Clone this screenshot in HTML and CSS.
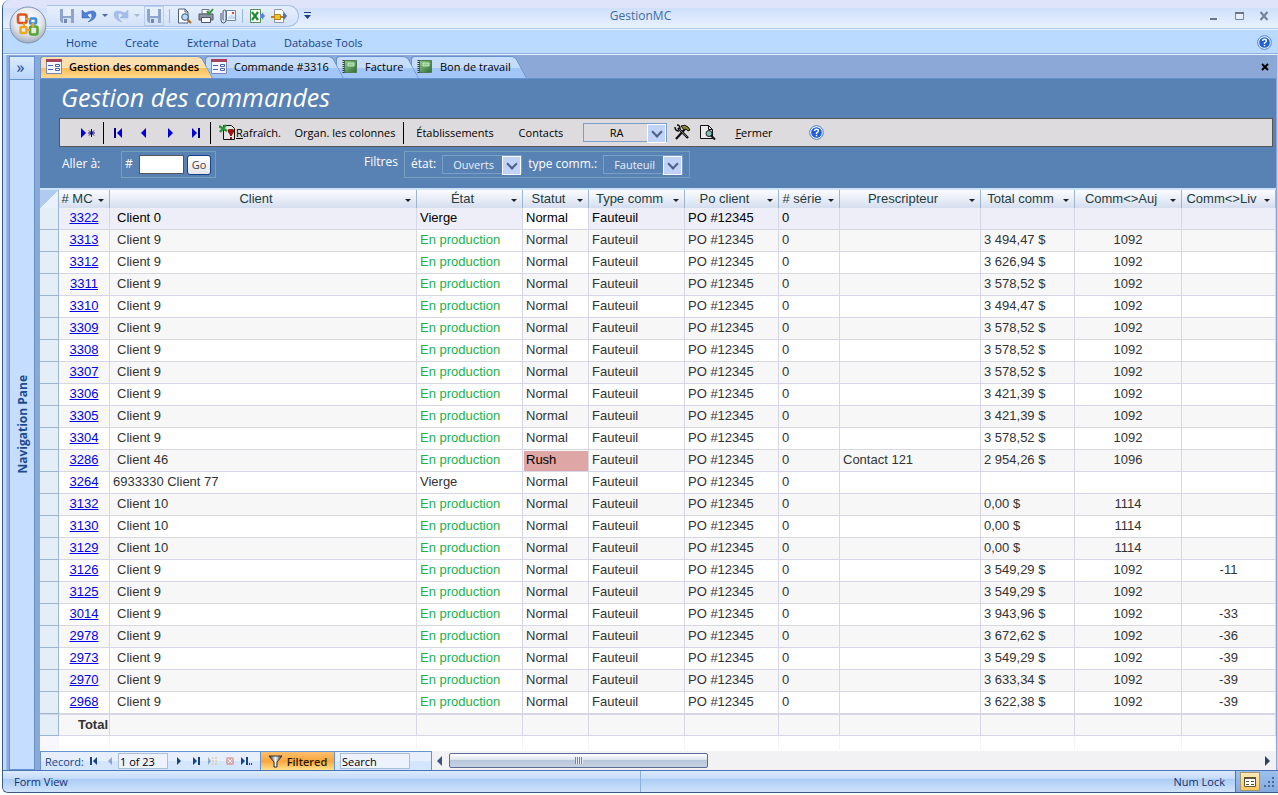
FILE: index.html
```html
<!DOCTYPE html>
<html lang="fr">
<head>
  <meta charset="UTF-8">
  <title>GestionMC</title>
  <link rel="stylesheet" href="styles.css">
</head>
<body>

<!-- Shared icons -->
<svg class="defs" aria-hidden="true">
  <defs>
    <radialGradient id="orb" cx="50%" cy="35%" r="65%">
      <stop offset="0" stop-color="#ffffff"/>
      <stop offset="0.6" stop-color="#e3e7ee"/>
      <stop offset="1" stop-color="#a3adbd"/>
    </radialGradient>
    <linearGradient id="green" x1="0" y1="0" x2="1" y2="1">
      <stop offset="0" stop-color="#8fce84"/>
      <stop offset="1" stop-color="#2f6b38"/>
    </linearGradient>
    <linearGradient id="funnel" x1="0" y1="0" x2="1" y2="0">
      <stop offset="0" stop-color="#2a2a2a"/>
      <stop offset="0.5" stop-color="#f4f4f4"/>
      <stop offset="1" stop-color="#333333"/>
    </linearGradient>
    <symbol id="i-save" viewBox="0 0 16 16">
      <path d="M1 1h14v14H3l-2-2z" fill="#8ea5cb"/>
      <path d="M4 1h8v7H4z" fill="#e9eff9"/>
      <path d="M4 10h8v5H4z" fill="#d4dff0"/>
      <path d="M5 11h3v4H5z" fill="#7188b3"/>
    </symbol>
    <symbol id="i-undo" viewBox="0 0 16 16">
      <path d="M1 2v8h8L6 7q5-4 5 1 0 3-4 6 7-2 8-7Q15 0 4 5z" fill="#4f7fd6" stroke="#2c5cb8" stroke-width="0.5"/>
    </symbol>
    <symbol id="i-form" viewBox="0 0 16 16">
      <path d="M0.5 0.5h15v14H0.5z" fill="#f3f6fd" stroke="#7c86b5"/>
      <path d="M0 0h16v3H0z" fill="#a8425c"/>
      <path d="M2 6.500h5M2 10.500h5" stroke="#4a62a8"/>
      <path d="M9.500 5.500h4v2h-4zM9.500 9.500h4v2h-4z" fill="#fff" stroke="#4a62a8"/>
    </symbol>
    <symbol id="i-report" viewBox="0 0 16 16">
      <path d="M2.500 1.500h12v12h-12z" fill="url(#green)" stroke="#4d7a50"/>
      <path d="M6 4h6v3H6z" fill="#8fca88" stroke="#d8f0d4" stroke-width="0.8"/>
      <path d="M1.500 1v13" stroke="#333" stroke-width="2" stroke-dasharray="1 1"/>
    </symbol>
    <symbol id="i-help" viewBox="0 0 16 16">
      <circle cx="8" cy="8" r="7.300" fill="#f2f7ff" stroke="#4a78c8"/>
      <circle cx="8" cy="8" r="5.700" fill="#1f5fd8"/>
      <path d="M6 6.500q0-2 2-2t2 1.800q0 1-2 2.200v1M8 10.500v1.500" fill="none" stroke="#fff" stroke-width="1.500"/>
    </symbol>
    <symbol id="i-preview" viewBox="0 0 16 16">
      <path d="M2.500 1h6.500l3 3v11H2.500z" fill="#fff" stroke="#4c5e80"/>
      <path d="M9 1v3h3" fill="none" stroke="#4c5e80"/>
      <circle cx="9" cy="9" r="3.300" fill="#b7dcf2" stroke="#34557f"/>
      <path d="M11.500 11.500l3.500 3.500" stroke="#b06a1e" stroke-width="2"/>
    </symbol>
  </defs>
</svg>

<div class="window">
  <!-- Title bar -->
  <header class="titlebar">
    <div class="qat">
      <button aria-label="Save"><svg width="16" height="16"><use href="#i-save"/></svg></button>
      <button aria-label="Undo"><svg width="16" height="16"><use href="#i-undo"/></svg></button>
      <i class="drop"></i>
      <button class="dim" aria-label="Redo"><svg class="flip" width="16" height="16"><use href="#i-undo"/></svg></button>
      <i class="drop dim"></i>
      <button class="boxed" aria-label="Save object"><svg width="16" height="16"><use href="#i-save"/></svg></button>
      <i class="split"></i>
      <button aria-label="Print preview"><svg width="16" height="16"><use href="#i-preview"/></svg></button>
      <button aria-label="Print">
        <svg width="16" height="16" viewBox="0 0 16 16">
          <path d="M4 1.500h7V6H4z" fill="#fff" stroke="#6b7690"/>
          <path d="M1 6h14v6H1z" fill="#8f95a4" stroke="#4f5666"/>
          <path d="M3.500 9.500h9v5h-9z" fill="#f8f8f8" stroke="#4c5468"/>
          <path d="M9 3l2 3 4-5" fill="none" stroke="#2f9a3a" stroke-width="2"/>
        </svg>
      </button>
      <button aria-label="Send by mail">
        <svg width="16" height="16" viewBox="0 0 16 16">
          <path d="M6.500 2.500h9v10h-9z" fill="#f6f9ff" stroke="#6d83ad"/>
          <path d="M8 9l3.500-2.500L15 9v2H8z" fill="#c9d9f3"/>
          <path d="M12 4h2v2h-2z" fill="#c8483c"/>
          <path d="M1 5v7q0 3 2.500 3T6 12V4q0-2-1.500-2T3 4v7q0 1 1 1" fill="none" stroke="#4b5870"/>
        </svg>
      </button>
      <i class="split"></i>
      <button aria-label="Export to Excel">
        <svg width="16" height="16" viewBox="0 0 16 16">
          <path d="M1.500 1.500h10v13h-10z" fill="#fff" stroke="#4f8f50"/>
          <path d="M3 4l6 8M9 4l-6 8" stroke="#1f8a35" stroke-width="2.200"/>
          <path d="M11 6h2V4l3 4-3 4v-2h-2z" fill="#5d86d8"/>
        </svg>
      </button>
      <button aria-label="Export">
        <svg width="16" height="16" viewBox="0 0 16 16">
          <path d="M3.500 1.500h7l2 2v11h-9z" fill="#fff" stroke="#8a93a8"/>
          <path d="M0 9h3M9 9h3" stroke="#b9821a" stroke-width="2"/>
          <path d="M3.500 6.500h6v5h-6z" fill="#f2c230" stroke="#b9821a"/>
          <path d="M12 6h1V4l3 4-3 4v-2h-1z" fill="#4d72c4"/>
        </svg>
      </button>
    </div>
    <button class="qat-more" aria-label="Customize toolbar"><svg width="7" height="8"><path d="M0 0.500h7" stroke="#15428b"/><path d="M0 3h7L3.500 7z" fill="#15428b"/></svg></button>
    <h1>GestionMC</h1>
    <div class="win-buttons">
      <button aria-label="Minimize"><svg width="10" height="10"><path d="M1 8h7" stroke="#6b7488" stroke-width="2"/></svg></button>
      <button aria-label="Restore"><svg width="10" height="10"><path d="M1.500 2.500h8v6h-8z" fill="#e8effc" stroke="#7484a6"/><path d="M1 2h9" stroke="#6b7488" stroke-width="2"/></svg></button>
      <button aria-label="Close"><svg width="10" height="10"><path d="M1.500 1l7 8M8.500 1l-7 8" stroke="#70809f" stroke-width="2"/></svg></button>
    </div>
  </header>

  <button class="office" aria-label="Office">
    <svg width="38" height="38" viewBox="0 0 38 38">
      <circle cx="19" cy="19" r="18" fill="url(#orb)" stroke="#7e93b5"/>
      <g fill="none" stroke-width="2.600">
        <rect x="9" y="8.500" width="8.500" height="8.500" rx="2" stroke="#e0531c"/>
        <rect x="21" y="12.500" width="6" height="5" rx="1" stroke="#3f8fd8"/>
        <rect x="11.500" y="21" width="6" height="6" rx="1" stroke="#f2a81d"/>
        <rect x="21" y="20.500" width="7.500" height="8" rx="2" stroke="#5aa532"/>
      </g>
      <path d="M17 13h4M15 17v4M24 17v4M17 24h4" stroke="#e8a33c" stroke-width="2"/>
    </svg>
  </button>

  <!-- Ribbon -->
  <nav class="ribbon">
    <a href="#">Home</a>
    <a href="#">Create</a>
    <a href="#">External Data</a>
    <a href="#">Database Tools</a>
    <button class="help" aria-label="Help"><svg width="15" height="15"><use href="#i-help"/></svg></button>
  </nav>

  <div class="workspace">
    <aside class="nav-pane">
      <button aria-label="Open navigation pane">»</button>
      <div class="nav-label"><span>Navigation Pane</span></div>
    </aside>

    <main class="document">
      <div class="tabs">
        <button class="tab active"><svg width="16" height="16"><use href="#i-form"/></svg><span>Gestion des commandes</span></button>
        <button class="tab order"><svg width="16" height="16"><use href="#i-form"/></svg><span>Commande #3316</span></button>
        <button class="tab invoice"><svg width="16" height="16"><use href="#i-report"/></svg><span>Facture</span></button>
        <button class="tab work"><svg width="16" height="16"><use href="#i-report"/></svg><span>Bon de travail</span></button>
        <button class="tab-close" aria-label="Close tab"><svg width="8" height="8"><path d="M1 1l6 6M7 1l-6 6" stroke="#000" stroke-width="2"/></svg></button>
      </div>

      <!-- Form header -->
      <section class="form-header">
        <h2>Gestion des commandes</h2>

        <div class="toolbar">
          <button class="new" aria-label="Nouveau"><svg width="16" height="12"><path d="M1 1v10l5-5z" fill="#0000d8"/><path d="M11.500 2v8M8 6h7M9 3.500l5 5M14 3.500l-5 5" stroke="#000080"/></svg></button>
          <i class="sep"></i>
          <button aria-label="Premier"><svg width="10" height="12"><path d="M1 1h2v10H1z" fill="#000080"/><path d="M9 1v10L4 6z" fill="#0000d8"/></svg></button>
          <button aria-label="Précédent"><svg width="10" height="12"><path d="M7 1v10L2 6z" fill="#0000d8"/></svg></button>
          <button aria-label="Suivant"><svg width="10" height="12"><path d="M3 1v10l5-5z" fill="#0000d8"/></svg></button>
          <button aria-label="Dernier"><svg width="10" height="12"><path d="M1 1v10l5-5z" fill="#0000d8"/><path d="M7 1h2v10H7z" fill="#000080"/></svg></button>
          <i class="sep"></i>
          <button class="refresh">
            <svg width="17" height="17" viewBox="0 0 17 17">
              <path d="M4.500 1.500h8l3 3v11h-11z" fill="#e4e2e2" stroke="#111"/>
              <path d="M0 2l8 5M7 1L1 8" stroke="#27963a" stroke-width="2.400"/>
              <path d="M11 5q-3 0-2 3l2 3v1h2v-1l2-3q1-3-2-3z" fill="#a01414"/>
              <path d="M11 13h2v2h-2z" fill="#a01414"/>
            </svg><span><u>R</u>afraîch.</span>
          </button>
          <button class="columns">Organ. les colonnes</button>
          <i class="sep"></i>
          <button class="places">Établissements</button>
          <button class="contacts">Contacts</button>
          <span class="combo user"><select aria-label="Utilisateur"><option>RA</option></select></span>
          <button class="tool" aria-label="Outils">
            <svg width="17" height="17" viewBox="0 0 17 17">
              <path d="M2 15L11 5" stroke="#111" stroke-width="2.200"/>
              <path d="M7 2q4-2 7 1l2 3-2 1-2-2-2 1z" fill="#8b8a2a" stroke="#111"/>
              <path d="M4 4l10 10" stroke="#111" stroke-width="2.400"/>
              <path d="M1 3q0 4 4 4M3 1q3 0 3 4" fill="none" stroke="#111" stroke-width="1.500"/>
              <path d="M5 5l8 8" stroke="#bbb" stroke-width="0.600"/>
            </svg>
          </button>
          <button class="tool" aria-label="Aperçu">
            <svg width="17" height="17" viewBox="0 0 17 17">
              <path d="M1.500 1.500h8l4 4v9h-12z" fill="#eceaea" stroke="#111"/>
              <path d="M9.500 1.500v4h4" fill="none" stroke="#111"/>
              <circle cx="10" cy="9.500" r="3" fill="#7fc0b8" stroke="#222"/>
              <path d="M12 11.500l4 4" stroke="#111" stroke-width="2"/>
            </svg>
          </button>
          <button class="close"><u>F</u>ermer</button>
          <button class="help" aria-label="Aide"><svg width="15" height="15"><use href="#i-help"/></svg></button>
        </div>

        <div class="filters">
          <span class="caption">Aller à:</span>
          <form class="group goto" onsubmit="return false">
            <label for="goto">#</label>
            <input type="text" id="goto">
            <button>Go</button>
          </form>
          <span class="caption filter-caption">Filtres</span>
          <div class="group">
            <label for="etat">état:</label>
            <span class="combo"><select id="etat"><option>Ouverts</option></select></span>
            <label for="type">type comm.:</label>
            <span class="combo"><select id="type"><option>Fauteuil</option></select></span>
          </div>
        </div>
      </section>

      <!-- Orders -->
      <div class="sheet">
        <table>
          <colgroup>
            <col class="c-sel"><col class="c-mc"><col><col class="c-etat"><col class="c-statut"><col class="c-type">
            <col class="c-po"><col class="c-serie"><col class="c-presc"><col class="c-total"><col class="c-auj"><col class="c-liv">
          </colgroup>
          <thead>
            <tr>
              <th class="corner"></th>
              <th><div># MC</div></th>
              <th><div>Client</div></th>
              <th><div>État</div></th>
              <th><div>Statut</div></th>
              <th><div>Type comm</div></th>
              <th><div>Po client</div></th>
              <th><div># série</div></th>
              <th><div>Prescripteur</div></th>
              <th><div>Total comm</div></th>
              <th><div>Comm&lt;&gt;Auj</div></th>
              <th><div>Comm&lt;&gt;Liv</div></th>
            </tr>
          </thead>
          <tbody id="orders"></tbody>
          <tfoot>
            <tr class="total"><td></td><td>Total</td><td></td><td></td><td></td><td></td><td></td><td></td><td></td><td></td><td></td><td></td></tr>
            <tr class="tail"><td></td><td></td><td></td><td></td><td></td><td></td><td></td><td></td><td></td><td></td><td></td><td></td></tr>
          </tfoot>
        </table>
      </div>

      <!-- Record navigation -->
      <div class="record-bar">
        <div class="record-nav">
          <label for="record">Record:</label>
          <button aria-label="First record"><svg width="8" height="8"><path d="M0 0h2v8H0zM7 0v8L3 4z" fill="#15428b"/></svg></button>
          <button class="dim" aria-label="Previous record"><svg width="8" height="8"><path d="M6 0v8L2 4z" fill="#15428b"/></svg></button>
          <input type="text" id="record" value="1 of 23">
          <button class="next" aria-label="Next record"><svg width="8" height="8"><path d="M2 0v8l4-4z" fill="#15428b"/></svg></button>
          <button aria-label="Last record"><svg width="8" height="8"><path d="M1 0v8l4-4zM6 0h2v8H6z" fill="#15428b"/></svg></button>
          <button class="dim" aria-label="New record"><svg width="10" height="8"><path d="M0 0v8l3-4z" fill="#15428b"/><path d="M4 1h6M4 4h6M4 7h6" stroke="#e8b84a" stroke-width="2" stroke-dasharray="2 1"/></svg></button>
          <button class="dim" aria-label="Delete record"><svg width="8" height="8"><rect width="8" height="8" rx="2" fill="#d84a3a"/><path d="M2 2l4 4M6 2L2 6" stroke="#fff"/></svg></button>
          <button aria-label="Go to total"><svg width="12" height="8"><path d="M0 0v8l4-4zM5 0h2v8H5zM8 6h1v2H8zM10 6h1v2h-1z" fill="#15428b"/></svg></button>
          <button class="filtered"><svg width="15" height="13"><path d="M1 1h13L9 7v5H6V7z" fill="url(#funnel)" stroke="#333"/></svg><span>Filtered</span></button>
          <input type="text" class="search" aria-label="Search" value="Search">
        </div>
        <div class="scrollbar">
          <svg width="6" height="10"><path d="M5 0v10L0 5z" fill="#3b5480"/></svg>
          <div class="track"><div class="thumb"></div></div>
          <svg width="6" height="10"><path d="M0 0v10l5-5z" fill="#2c4266"/></svg>
        </div>
      </div>
    </main>
  </div>

  <!-- Status bar -->
  <footer class="status">
    <span class="view">Form View</span>
    <span class="keys">Num Lock</span>
    <div class="view-box">
      <button aria-label="Form View">
        <svg width="12" height="12"><path d="M0.500 1.500h11v9h-11z" fill="#fff" stroke="#5a5340"/><path d="M0 2h12" stroke="#5a5340" stroke-width="2"/><path d="M2 5.500h3M2 8.500h3M7 5.500h3M7 8.500h3" stroke="#5a5340"/></svg>
      </button>
      <svg width="12" height="12"><path d="M8 1h2v2H8zM4 5h2v2H4zM8 5h2v2H8zM0 9h2v2H0zM4 9h2v2H4zM8 9h2v2H8z" fill="#47689d"/></svg>
    </div>
  </footer>
</div>

<script>
  // mc, client, total, comm<>auj, comm<>liv
  const orders = [
    ['3322', 'Client 0', '', '', ''],
    ['3313', 'Client 9', '3 494,47 $', '1092', ''],
    ['3312', 'Client 9', '3 626,94 $', '1092', ''],
    ['3311', 'Client 9', '3 578,52 $', '1092', ''],
    ['3310', 'Client 9', '3 494,47 $', '1092', ''],
    ['3309', 'Client 9', '3 578,52 $', '1092', ''],
    ['3308', 'Client 9', '3 578,52 $', '1092', ''],
    ['3307', 'Client 9', '3 578,52 $', '1092', ''],
    ['3306', 'Client 9', '3 421,39 $', '1092', ''],
    ['3305', 'Client 9', '3 421,39 $', '1092', ''],
    ['3304', 'Client 9', '3 578,52 $', '1092', ''],
    ['3286', 'Client 46', '2 954,26 $', '1096', ''],
    ['3264', '6933330 Client 77', '', '', ''],
    ['3132', 'Client 10', '0,00 $', '1114', ''],
    ['3130', 'Client 10', '0,00 $', '1114', ''],
    ['3129', 'Client 10', '0,00 $', '1114', ''],
    ['3126', 'Client 9', '3 549,29 $', '1092', '-11'],
    ['3125', 'Client 9', '3 549,29 $', '1092', ''],
    ['3014', 'Client 9', '3 943,96 $', '1092', '-33'],
    ['2978', 'Client 9', '3 672,62 $', '1092', '-36'],
    ['2973', 'Client 9', '3 549,29 $', '1092', '-39'],
    ['2970', 'Client 9', '3 633,34 $', '1092', '-39'],
    ['2968', 'Client 9', '3 622,38 $', '1092', '-39']
  ];

  document.getElementById('orders').innerHTML = orders.map(([mc, client, total, auj, liv], i) => {
    const blank = total === '';
    const rush = mc === '3286';
    return `
      <tr class="${i === 0 ? 'current' : ''}">
        <td></td>
        <td class="num"><a href="#">${mc}</a></td>
        <td class="${/^\d/.test(client) ? '' : 'client'}">${client}</td>
        <td class="etat ${blank ? '' : 'prod'}">${blank ? 'Vierge' : 'En production'}</td>
        <td class="statut ${rush ? 'rush' : ''}">${rush ? 'Rush' : 'Normal'}</td>
        <td>Fauteuil</td>
        <td>PO #12345</td>
        <td>0</td>
        <td>${rush ? 'Contact 121' : ''}</td>
        <td>${total}</td>
        <td class="num">${auj}</td>
        <td class="num">${liv}</td>
      </tr>`;
  }).join('');
</script>

</body>
</html>
```
FILE: styles.css
```css
* {
  box-sizing: border-box;
}

body {
  margin: 0;
  padding: 0 0 2px 2px;
  min-height: 100vh;
  display: flex;
  background: #fff;
  font-family: "Open Sans", "Noto Sans", sans-serif;
  font-size: 11px;
  color: #000;
}

button, input, select {
  font: inherit;
  color: inherit;
}

button {
  display: flex;
  align-items: center;
  justify-content: center;
  padding: 0;
  border: none;
  background: none;
  white-space: nowrap;
}

svg {
  display: block;
  flex: none;
}

.defs {
  position: absolute;
  width: 0;
  height: 0;
}

.dim {
  opacity: 0.4;
}

.window {
  position: relative;
  flex: 1;
  min-width: 0;
  display: flex;
  flex-direction: column;
  border-left: 1px solid #3b5a82;
  border-bottom: 1px solid #3b5a82;
  border-radius: 8px 0 0 6px;
  background: #bbdaff;
  overflow: hidden;
}

/* Title bar */
.titlebar {
  display: flex;
  align-items: center;
  height: 29px;
  padding: 2px 9px 0 44px;
  background: linear-gradient(#dfe4fb 8px, #cfe0fb 8px, #e8f1ff 28px, #a9cdf3 28px);
}

/* title sits in the middle of the window, whatever the toolbar takes */
.titlebar h1 {
  position: absolute;
  left: 0;
  right: 0;
  margin: 0;
  font-size: 12px;
  font-weight: normal;
  text-align: center;
  color: #3e6aaa;
  pointer-events: none;
}

.qat {
  display: flex;
  align-items: center;
  gap: 6px;
  width: 252px;
  height: 22px;
  margin-right: 5px;
  padding-left: 12px;
  border: 1px solid #a9c1e6;
  border-left: none;
  border-radius: 0 11px 11px 0;
  background: linear-gradient(#e6effc, #d3e2f8);
}

.qat .boxed {
  width: 20px;
  height: 20px;
  margin: 0 -1px;
  border: 1px solid #b9cdec;
}

.flip {
  transform: scaleX(-1);
}

.drop {
  width: 0;
  height: 0;
  margin: 0 -1px;
  border: 3px solid transparent;
  border-top-color: #4a6ca8;
  border-bottom: none;
}

.split {
  width: 1px;
  height: 14px;
  background: #9fb8de;
}

.win-buttons {
  display: flex;
  gap: 15px;
  margin-left: auto;
}

.office {
  position: absolute;
  left: 6px;
  top: 6px;
}

/* Ribbon */
.ribbon {
  display: flex;
  align-items: center;
  gap: 28px;
  height: 26px;
  padding: 0 6px 0 63px;
  border-top: 1px solid #e6f1ff;
  border-bottom: 1px solid #e6f1ff;
  box-shadow: inset 0 -1px #8fb0dc;
}

.ribbon a {
  color: #15428b;
  text-decoration: none;
}

.ribbon .help {
  margin-left: auto;
}

/* Workspace */
.workspace {
  flex: 1;
  display: flex;
  gap: 5px;
  padding: 0 1px 0 6px;
  border-right: 1px solid #bcd0f5;
  background: linear-gradient(90deg, #bbdaff 3px, #8ba8d6 4px);
}

.nav-pane {
  display: flex;
  flex-direction: column;
  width: 26px;
  margin-top: 1px;
  border: 1px solid #6593cf;
  background: #c5deff;
}

.nav-pane button {
  height: 23px;
  padding: 0 3px 3px 0;
  border-bottom: 1px solid #6593cf;
  background: linear-gradient(#dcebfe, #b9d5fb);
  font-size: 16px;
  color: #15428b;
}

.nav-label {
  flex: 1;
  display: flex;
  align-items: center;
  justify-content: center;
}

.nav-label span {
  writing-mode: vertical-rl;
  transform: rotate(180deg);
  font-size: 12px;
  font-weight: bold;
  color: #1e4b8f;
}

.document {
  flex: 1;
  min-width: 0;
  display: flex;
  flex-direction: column;
}

/* Document tabs */
.tabs {
  display: flex;
  height: 24px;
  padding-top: 1px;
  border-bottom: 1px solid #6593cf;
  background: #8ba8d6;
}

.tab {
  position: relative;
  isolation: isolate;
  justify-content: flex-start;
  gap: 7px;
  padding: 0 0 2px 5px;
  border: 1px solid #6593cf;
  border-width: 1px 0 0 1px;
  border-radius: 4px 0 0 0;
  background: linear-gradient(#c6dcfb 50%, #a3c6f8 50%);
}

/* slanted right edge */
.tab::after {
  content: "";
  position: absolute;
  z-index: -1;
  top: -1px;
  bottom: 0;
  right: -8px;
  width: 30px;
  border: 1px solid #6593cf;
  border-width: 1px 1px 0 0;
  border-radius: 0 5px 0 0;
  background: inherit;
  transform: skewX(28deg);
  transform-origin: bottom;
}

/* the straight part stops before the slant starts */
.tab {
  margin-right: 10px;
}

.tab::after {
  right: -18px;
}

.tab.active {
  z-index: 4;
  width: 155px;
  font-weight: 600;
  background: linear-gradient(#fde0b0 50%, #fdbc55 50%, #ffd98c);
}

.tab.order {
  z-index: 3;
  width: 121px;
}

.tab.invoice {
  z-index: 2;
  width: 65px;
}

.tab.work {
  z-index: 1;
  width: 98px;
}

.tab-close {
  margin-left: auto;
  margin-right: 7px;
}

/* Form header */
.form-header {
  padding: 0 3px 10px 19px;
  background: #5982b4;
  color: #fff;
}

.form-header h2 {
  margin: 0;
  padding: 0 0 3px 2px;
  font-size: 25px;
  line-height: 36px;
  font-style: italic;
  font-weight: normal;
}

.toolbar {
  display: flex;
  align-items: center;
  height: 29px;
  padding-left: 13px;
  border: 1px solid #555;
  background: #dddbdd;
  color: #000;
}

.toolbar button {
  width: 26px;
  height: 24px;
}

.toolbar .new {
  width: 29px;
}

.sep {
  width: 1px;
  height: 22px;
  margin: 0 1px;
  background: #000;
}

.toolbar .refresh {
  width: 76px;
}

.toolbar .columns {
  width: 114px;
}

.toolbar .places {
  width: 100px;
}

.toolbar .contacts {
  width: 72px;
}

.toolbar .tool {
  width: 25px;
}

.toolbar .close {
  width: 68px;
}

.toolbar .help {
  width: 56px;
}

/* Combo boxes */
.combo {
  position: relative;
  display: block;
  width: 80px;
  height: 19px;
  border: 1px solid #7a9fc8;
}

.combo select {
  appearance: none;
  width: 100%;
  height: 100%;
  padding: 0 17px 0 0;
  border: none;
  background: none;
  text-align-last: center;
}

.combo::after {
  content: "";
  position: absolute;
  top: 0;
  right: 0;
  width: 17px;
  height: 17px;
  border: 1px solid #fff;
  background: #c1d3fb;
  pointer-events: none;
}

.combo::before {
  content: "";
  position: absolute;
  z-index: 1;
  top: 4px;
  right: 5px;
  width: 6px;
  height: 6px;
  border: solid #4d6185;
  border-width: 0 2px 2px 0;
  transform: rotate(45deg);
  pointer-events: none;
}

.combo.user {
  width: 84px;
  margin: 0 3px 0 6px;
}

/* Filters */
.filters {
  display: flex;
  align-items: flex-start;
  padding-top: 4px;
  font-size: 12px;
}

.caption {
  width: 62px;
  padding-left: 3px;
  line-height: 26px;
}

.filter-caption {
  width: 43px;
  margin-left: 145px;
  line-height: 22px;
}

.group {
  display: flex;
  align-items: center;
  gap: 6px;
  height: 27px;
  padding: 0 6px;
  border: 1px solid #7a9fb8;
}

.group label {
  height: 20px;
}

.goto {
  gap: 3px;
  width: 95px;
  padding: 0 3px;
}

.goto label {
  width: 11px;
}

.goto input {
  width: 45px;
  height: 19px;
  border: 1px solid #555;
  background: #fff;
  color: #000;
}

.goto button {
  width: 24px;
  height: 20px;
  border: 1px solid #15428b;
  border-radius: 3px;
  background: linear-gradient(#fff, #e6e4ea);
  font-size: 11px;
  color: #444;
}

.group .combo {
  font-size: 11px;
  color: #e8f0fa;
}

/* Data sheet */
.sheet {
  flex: 1;
  border-top: 2px solid #cde2fb;
  background: #fff;
  font-family: "Liberation Sans", Arial, sans-serif;
  font-size: 13px;
  color: #333;
}

.sheet table {
  width: 100%;
  table-layout: fixed;
  border-collapse: separate;
  border-spacing: 0;
}

.c-sel { width: 19px; }
.c-mc { width: 51px; }
.c-etat { width: 106px; }
.c-statut { width: 66px; }
.c-type { width: 96px; }
.c-po { width: 94px; }
.c-serie { width: 61px; }
.c-presc { width: 141px; }
.c-total { width: 94px; }
.c-auj { width: 107px; }
.c-liv { width: 94px; }

th {
  height: 18px;
  padding: 0;
  border-right: 1px solid #9cb6cc;
  background: linear-gradient(#fbfcff, #d5deef);
  font-weight: normal;
  line-height: 18px;
  white-space: nowrap;
  color: #1e3c3c;
}

th div {
  position: relative;
  padding-right: 14px;
}

/* column menu arrow */
th div::after {
  content: "";
  position: absolute;
  top: 9px;
  right: 5px;
  border: 3px solid transparent;
  border-top-color: #222;
  border-bottom: none;
}

th.corner {
  background: linear-gradient(135deg, #b0cbf0 50%, #e8f1fd 50%);
}

td {
  height: 22px;
  padding: 0 3px;
  border-right: 1px solid #d6d6e6;
  border-bottom: 1px solid #d6d6e6;
  line-height: 19px;
  vertical-align: top;
  white-space: nowrap;
}

td:first-child {
  border-color: #9cb6cc;
  background: #e4eef6;
}

tbody tr:nth-child(even) td:not(:first-child, .etat),
.total td:not(:first-child) {
  background: #f7f7f7;
}

tbody .current td:not(:first-child, .statut) {
  background: #eeeef8;
}

.current {
  color: #000;
}

.num {
  text-align: center;
}

.num a {
  color: #0000e8;
}

td.client {
  padding-left: 7px;
}

.prod {
  color: #22b14c;
}

tbody tr td.rush {
  background: #dfa6a6 !important;
  box-shadow: inset 1px 1px #f7f7f7;
  color: #000;
}

.total td {
  padding: 0 1px;
  border-top: 1px solid #d6d6e6;
  text-align: right;
  font-weight: bold;
}

.tail td {
  height: 14px;
  border-bottom: none;
  border-right-color: #f4f4fb;
  line-height: 14px;
}

.tail td:first-child {
  background: #f7f7fd;
}

/* Record bar */
.record-bar {
  display: flex;
  height: 19px;
  background: #f2f2f4;
}

.record-nav {
  display: flex;
  align-items: center;
  width: 392px;
  padding-left: 4px;
  border-top: 1px solid #6593cf;
  border-right: 1px solid #6593cf;
  border-left: 1px solid #6593cf;
  background: linear-gradient(#e8effc 50%, #d3e6fd 50%);
  color: #15428b;
}

.record-nav label {
  width: 41px;
}

.record-nav button {
  width: 16px;
}

.record-nav .next,
.record-nav .next ~ button {
  width: 17px;
}

.record-nav input {
  width: 50px;
  height: 16px;
  padding: 0 1px;
  border: 1px solid #a9bfe0;
  background: #eef2fd;
  color: #000;
}

.record-nav .next {
  margin-left: 2px;
}

.record-nav .next ~ .filtered {
  gap: 4px;
  width: 75px;
  height: 18px;
  margin: 0 5px;
  border: 1px solid #6593cf;
  border-width: 0 1px;
  background: linear-gradient(#fdc070, #fba53a 50%, #ffe08c);
  font-weight: 600;
  color: #2a1a00;
}

.record-nav .search {
  width: 70px;
}

.scrollbar {
  flex: 1;
  display: flex;
  align-items: center;
  padding: 0 5px;
  gap: 6px;
}

.track {
  flex: 1;
  height: 15px;
}

.thumb {
  display: flex;
  align-items: center;
  justify-content: center;
  width: 32%;
  height: 15px;
  border: 1px solid #5b6b95;
  border-radius: 2px;
  background: linear-gradient(#fff, #dde3ee 45%, #b9c7d8 50%, #c6d2e2);
}

.thumb::before {
  content: "";
  width: 8px;
  height: 7px;
  background: repeating-linear-gradient(90deg, #7a869c 0 1px, #e8edf5 1px 2px);
}

/* Status bar */
.status {
  display: flex;
  align-items: center;
  height: 22px;
  border-top: 1px solid #4a74b4;
  background: linear-gradient(#dcebfe, #c6dcf9 35%, #abcdf5 40%, #d0e3fb);
  color: #15306b;
}

.status .view {
  align-self: stretch;
  width: 50%;
  padding-left: 11px;
  border-right: 1px solid #8fb0dc;
  line-height: 21px;
}

.status .keys {
  margin-left: auto;
  padding-right: 10px;
}

.view-box {
  align-self: stretch;
  display: flex;
  align-items: center;
  gap: 4px;
  padding: 0 2px 0 4px;
  border-left: 1px solid #4a74b4;
  background: linear-gradient(#9cc0ee, #84abe0);
}

.view-box button {
  width: 20px;
  height: 19px;
  border: 1px solid #a8976a;
  background: linear-gradient(#fde8b5, #fcc75c);
}
```
